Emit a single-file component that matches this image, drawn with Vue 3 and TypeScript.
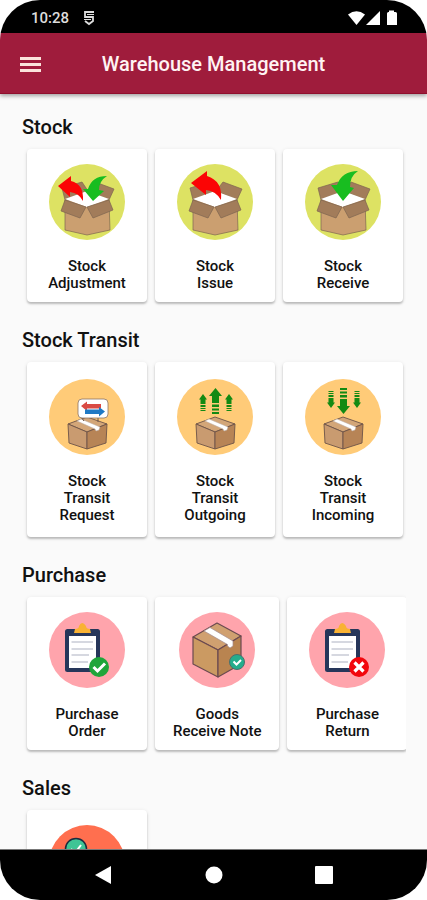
<script setup lang="ts">
type Icon =
  | 'adjustment' | 'issue' | 'receive'
  | 'request' | 'outgoing' | 'incoming'
  | 'order' | 'goods' | 'return' | 'sales'

interface Tile {
  icon: Icon
  lines: string[]
}

interface Section {
  title: string
  tall?: boolean
  tiles: Tile[]
}

const sections: Section[] = [
  {
    title: 'Stock',
    tiles: [
      { icon: 'adjustment', lines: ['Stock', 'Adjustment'] },
      { icon: 'issue', lines: ['Stock', 'Issue'] },
      { icon: 'receive', lines: ['Stock', 'Receive'] },
    ],
  },
  {
    title: 'Stock Transit',
    tall: true,
    tiles: [
      { icon: 'request', lines: ['Stock', 'Transit', 'Request'] },
      { icon: 'outgoing', lines: ['Stock', 'Transit', 'Outgoing'] },
      { icon: 'incoming', lines: ['Stock', 'Transit', 'Incoming'] },
    ],
  },
  {
    title: 'Purchase',
    tiles: [
      { icon: 'order', lines: ['Purchase', 'Order'] },
      { icon: 'goods', lines: ['Goods', 'Receive Note'] },
      { icon: 'return', lines: ['Purchase', 'Return'] },
    ],
  },
  {
    title: 'Sales',
    tiles: [{ icon: 'sales', lines: [] }],
  },
]

const discs: Record<Icon, string> = {
  adjustment: 'lime', issue: 'lime', receive: 'lime',
  request: 'amber', outgoing: 'amber', incoming: 'amber',
  order: 'pink', goods: 'pink', return: 'pink',
  sales: 'coral',
}
</script>

<template>
  <div class="phone">
    <svg class="defs" aria-hidden="true">
      <defs>
        <g id="open-box" stroke="#7d6450" stroke-width="0.7" stroke-linejoin="round">
          <path d="M16 36 L13 24 L33 18 L39 27Z" fill="#a27c5a" />
          <path d="M39 27 L46 18 L65 25 L60 36Z" fill="#a27c5a" />
          <path d="M16 36 L16 66 L38 71 L61 66 L60 36Z" fill="#cb9f70" />
          <path d="M16 35 L38 27 L60 35 L38 43Z" fill="#fff" stroke="none" />
          <path d="M16 36 L37 43 L31 54 L12 47Z" fill="#a27c5a" />
          <path d="M38 43 L60 36 L64 46 L44 54Z" fill="#a27c5a" />
        </g>
        <g id="closed-box" stroke="#6d5348" stroke-width="0.9" stroke-linejoin="round">
          <path d="M19 45 L38 38 L58 45 L38 53Z" fill="#d3a678" />
          <path d="M19 45 L38 53 L38 70 L20 64Z" fill="#c99b70" />
          <path d="M58 45 L38 53 L38 70 L57 64Z" fill="#b78456" />
          <path d="M28 42 L32 40 L51 48 L50 51 L47 52 L46 50Z" fill="#fff" stroke="#b9aaa3" stroke-width="0.5" />
        </g>
        <g id="clipboard">
          <rect x="16" y="17" width="35" height="43" rx="2.5" fill="#26365a" />
          <path d="M20 24 H47 V56 H20Z" fill="#fff" />
          <path d="M25 21 L26 17 Q30 17 30 14 Q33 8 37 14 Q37 17 41 17 L42 21Z" fill="#f9b233" />
          <path d="M22.500 30 H44 M22.500 37 H44 M22.500 43 H40 M22.500 50 H39" stroke="#c9ccd6" stroke-width="1.500" />
        </g>
        <g id="arrows" fill="#138a13">
          <path d="M38.500 9 L45 17 H42 V24 H35 V17 H32Z M35 25.500 H42 V28 H35Z M35 29.500 H42 V31.500 H35Z M35 33 H42 V35 H35Z" />
          <path d="M26 15 L30 20.500 H28.500 V25 H23.500 V20.500 H22Z M23.500 26 H28.500 V28 H23.500Z M23.500 29 H28.500 V30 H23.500Z M23.500 31 H28.500 V32 H23.500Z" />
          <path d="M52 15 L56 20.500 H54.500 V25 H49.500 V20.500 H48Z M49.500 26 H54.500 V28 H49.500Z M49.500 29 H54.500 V30 H49.500Z M49.500 31 H54.500 V32 H49.500Z" />
        </g>
      </defs>
    </svg>

    <div class="status">
      <span class="clock">10:28</span>
      <svg class="notice" width="12" height="16" viewBox="0 0 12 16" fill="none" stroke="#ddd" stroke-width="1.800">
        <path d="M11 2 H2 V7 H10 V11 L6 14 L2 11" />
        <path d="M4 4.500 H11 M1 9.500 H8" stroke-width="1.200" />
      </svg>
      <svg class="signals" width="50" height="16" viewBox="0 0 50 16" fill="#fff">
        <path d="M0 4.500 Q8.500 -2 17 4.500 L8.500 15Z" />
        <path d="M18 15 L32 1 V15Z" />
        <path d="M41 2 V0.500 H46 V2 H47.500 Q49 2 49 3.500 V15 H39 V3.500 Q39 2 40.500 2Z" />
      </svg>
    </div>

    <header class="appbar">
      <button class="menu" type="button" aria-label="Menu">
        <svg width="21" height="15" viewBox="0 0 21 15" fill="#fbe3dc">
          <path d="M0 0 H21 V3 H0Z M0 6 H21 V9 H0Z M0 12 H21 V15 H0Z" />
        </svg>
      </button>
      <h1 class="title">Warehouse Management</h1>
    </header>

    <main class="content">
      <section v-for="section in sections" :key="section.title" class="section">
        <h2 class="heading">{{ section.title }}</h2>
        <div class="strip">
          <button
            v-for="tile in section.tiles"
            :key="tile.icon"
            type="button"
            class="card"
            :class="{ tall: section.tall }"
            :aria-label="tile.lines.join(' ') || section.title"
          >
            <svg class="icon" viewBox="0 0 76 76" aria-hidden="true">
              <circle cx="38" cy="38" r="38" :class="discs[tile.icon]" />

              <template v-if="tile.icon === 'adjustment'">
                <use href="#open-box" />
                <path d="M9 22 L22 12 L22 17 Q35 20 34 37 Q30 29 21 28 L21 33Z" fill="#fb0505" />
                <path d="M44 37 L34 25 L39 25 Q43 12 58 12 Q50 17 50 26 L55 27Z" fill="#18bd20" />
              </template>

              <template v-else-if="tile.icon === 'issue'">
                <use href="#open-box" />
                <path d="M14 19 L30 7 L30 12 Q46 17 44 36 Q39 27 29 26 L29 31Z" fill="#fb0505" />
              </template>

              <template v-else-if="tile.icon === 'receive'">
                <use href="#open-box" />
                <path d="M38 37 L26 21 L32 21 Q37 7 53 7 Q45 12 45 23 L49 24Z" fill="#18bd20" />
              </template>

              <template v-else-if="tile.icon === 'request'">
                <use href="#closed-box" />
                <path d="M32 38 L35 42 M49 38 V43" stroke="#6d5348" stroke-width="1" />
                <rect x="29" y="20" width="30" height="19" rx="4" fill="#fff" stroke="#8d7462" stroke-width="0.8" />
                <path d="M32 27 L38 22.500 V25 H52 V29.500 H38 V32Z" fill="#d94a43" />
                <path d="M56 32.500 L50 28 V30.500 H36 V35 H50 V37.500Z" fill="#1f79c4" />
              </template>

              <template v-else-if="tile.icon === 'outgoing'">
                <use href="#arrows" />
                <use href="#closed-box" />
              </template>

              <template v-else-if="tile.icon === 'incoming'">
                <use href="#closed-box" />
                <use href="#arrows" transform="matrix(1 0 0 -1 0 44)" />
              </template>

              <template v-else-if="tile.icon === 'order'">
                <use href="#clipboard" />
                <circle cx="50" cy="55" r="10" fill="#1fa53a" />
                <path d="M44.500 55 L48.500 59 L56 51.500" fill="none" stroke="#fff" stroke-width="3" />
              </template>

              <template v-else-if="tile.icon === 'goods'">
                <g stroke="#6b4a50" stroke-width="1.200" stroke-linejoin="round">
                  <path d="M14 25 L38 11 L62 24 L39 38Z" fill="#d0a070" />
                  <path d="M14 25 L39 38 V65 L14 52Z" fill="#cb9a62" />
                  <path d="M62 24 L39 38 V65 L62 52Z" fill="#b98450" />
                  <path d="M25 19 L31 15.500 L54 29 V34 L51 36 L48.500 34 V32.500Z" fill="#fff" stroke="#a48b8d" stroke-width="0.7" />
                </g>
                <circle cx="58" cy="50" r="7.500" fill="#24ad8c" stroke="#4c6f6d" stroke-width="1" />
                <path d="M54.500 49.500 L57.500 52.500 L62 48" fill="none" stroke="#fff" stroke-width="2" />
              </template>

              <template v-else-if="tile.icon === 'return'">
                <use href="#clipboard" />
                <circle cx="50" cy="55" r="10" fill="#f2060c" />
                <path d="M45.500 50.500 L54.500 59.500 M54.500 50.500 L45.500 59.500" stroke="#fff" stroke-width="3.200" />
              </template>

              <template v-else>
                <circle cx="27" cy="24" r="10.500" fill="#3fc495" stroke="#1c2b3f" stroke-width="1.500" />
                <path d="M22 24 L26 28 L32 20" fill="none" stroke="#fff" stroke-width="2" />
              </template>
            </svg>
            <span v-if="tile.lines.length" class="label">
              <span v-for="line in tile.lines" :key="line" class="line">{{ line }}</span>
            </span>
          </button>
        </div>
      </section>
    </main>

    <nav class="navbar">
      <button type="button" aria-label="Back">
        <svg width="18" height="18" viewBox="0 0 18 18" fill="#fff"><path d="M0 9 L16 0 V18Z" /></svg>
      </button>
      <button type="button" aria-label="Home">
        <svg width="18" height="18" viewBox="0 0 18 18" fill="#fff"><circle cx="9" cy="9" r="8.500" /></svg>
      </button>
      <button type="button" aria-label="Recent apps">
        <svg width="18" height="18" viewBox="0 0 18 18" fill="#fff"><rect width="18" height="18" rx="1" /></svg>
      </button>
    </nav>
  </div>
</template>

<style>
body {
  background: #fff;
}
</style>

<style scoped>
.phone {
  display: flex;
  flex-direction: column;
  height: 100vh;
  overflow: hidden;
  border-radius: 40px;
  background: #fafafa;
  color: #111;
  font-family: Roboto, "Liberation Sans", sans-serif;
}

.defs {
  position: absolute;
  width: 0;
  height: 0;
}

button {
  margin: 0;
  padding: 0;
  border: 0;
  background: none;
  color: inherit;
  font: inherit;
  cursor: pointer;
}

svg {
  display: block;
}

.status {
  display: flex;
  flex: none;
  align-items: center;
  height: 33px;
  padding: 2px 29px 0 31px;
  box-sizing: border-box;
  background: #000;
}

.clock {
  color: #ddd;
  font-size: 15px;
  font-weight: 500;
  line-height: 20px;
}

.notice {
  margin-left: 14px;
}

.signals {
  margin-left: auto;
}

.appbar {
  display: grid;
  flex: none;
  grid-template-columns: 21px 1fr 21px;
  align-items: center;
  height: 61px;
  padding: 2px 20px 0;
  box-sizing: border-box;
  border-bottom: 1px solid #8f0f2d;
  background: #9f1c3c;
  box-shadow: 0 2px 4px rgba(0, 0, 0, 0.35);
  z-index: 1;
}

.title {
  margin: 0;
  color: #fff3f3;
  font-size: 20px;
  font-weight: 500;
  line-height: 24px;
  text-align: center;
}

.content {
  flex: 1;
  min-height: 0;
  overflow-x: hidden;
  overflow-y: auto;
  padding: 21px 21px 0 22px;
  scrollbar-width: none;
}

.heading {
  margin: 0;
  font-size: 20px;
  font-weight: 500;
  line-height: 24px;
}

.strip {
  display: flex;
  gap: 8px;
  overflow-x: auto;
  padding: 10px 0 26px 5px;
  scrollbar-width: none;
}

.card {
  display: flex;
  flex: none;
  flex-direction: column;
  align-items: center;
  gap: 18px;
  min-width: 120px;
  min-height: 153px;
  padding: 15px 18px 10px;
  box-sizing: border-box;
  border-radius: 4px;
  background: #fff;
  box-shadow: 0 2px 2px rgba(0, 0, 0, 0.2), 0 1px 4px rgba(0, 0, 0, 0.1);
}

.card.tall {
  padding-top: 17px;
  padding-bottom: 13px;
}

.icon {
  width: 76px;
  height: 76px;
}

.lime { fill: #dde263; }
.amber { fill: #ffcb78; }
.pink { fill: #ffa4ac; }
.coral { fill: #ff6f4f; }

.label {
  font-size: 15px;
  font-weight: 500;
  line-height: 17px;
  text-align: center;
}

.line {
  display: block;
  white-space: nowrap;
}

.navbar {
  display: flex;
  flex: none;
  justify-content: center;
  gap: 92px;
  height: 51px;
  box-sizing: border-box;
  border-top: 1px solid #777;
  background: #000;
}
</style>
